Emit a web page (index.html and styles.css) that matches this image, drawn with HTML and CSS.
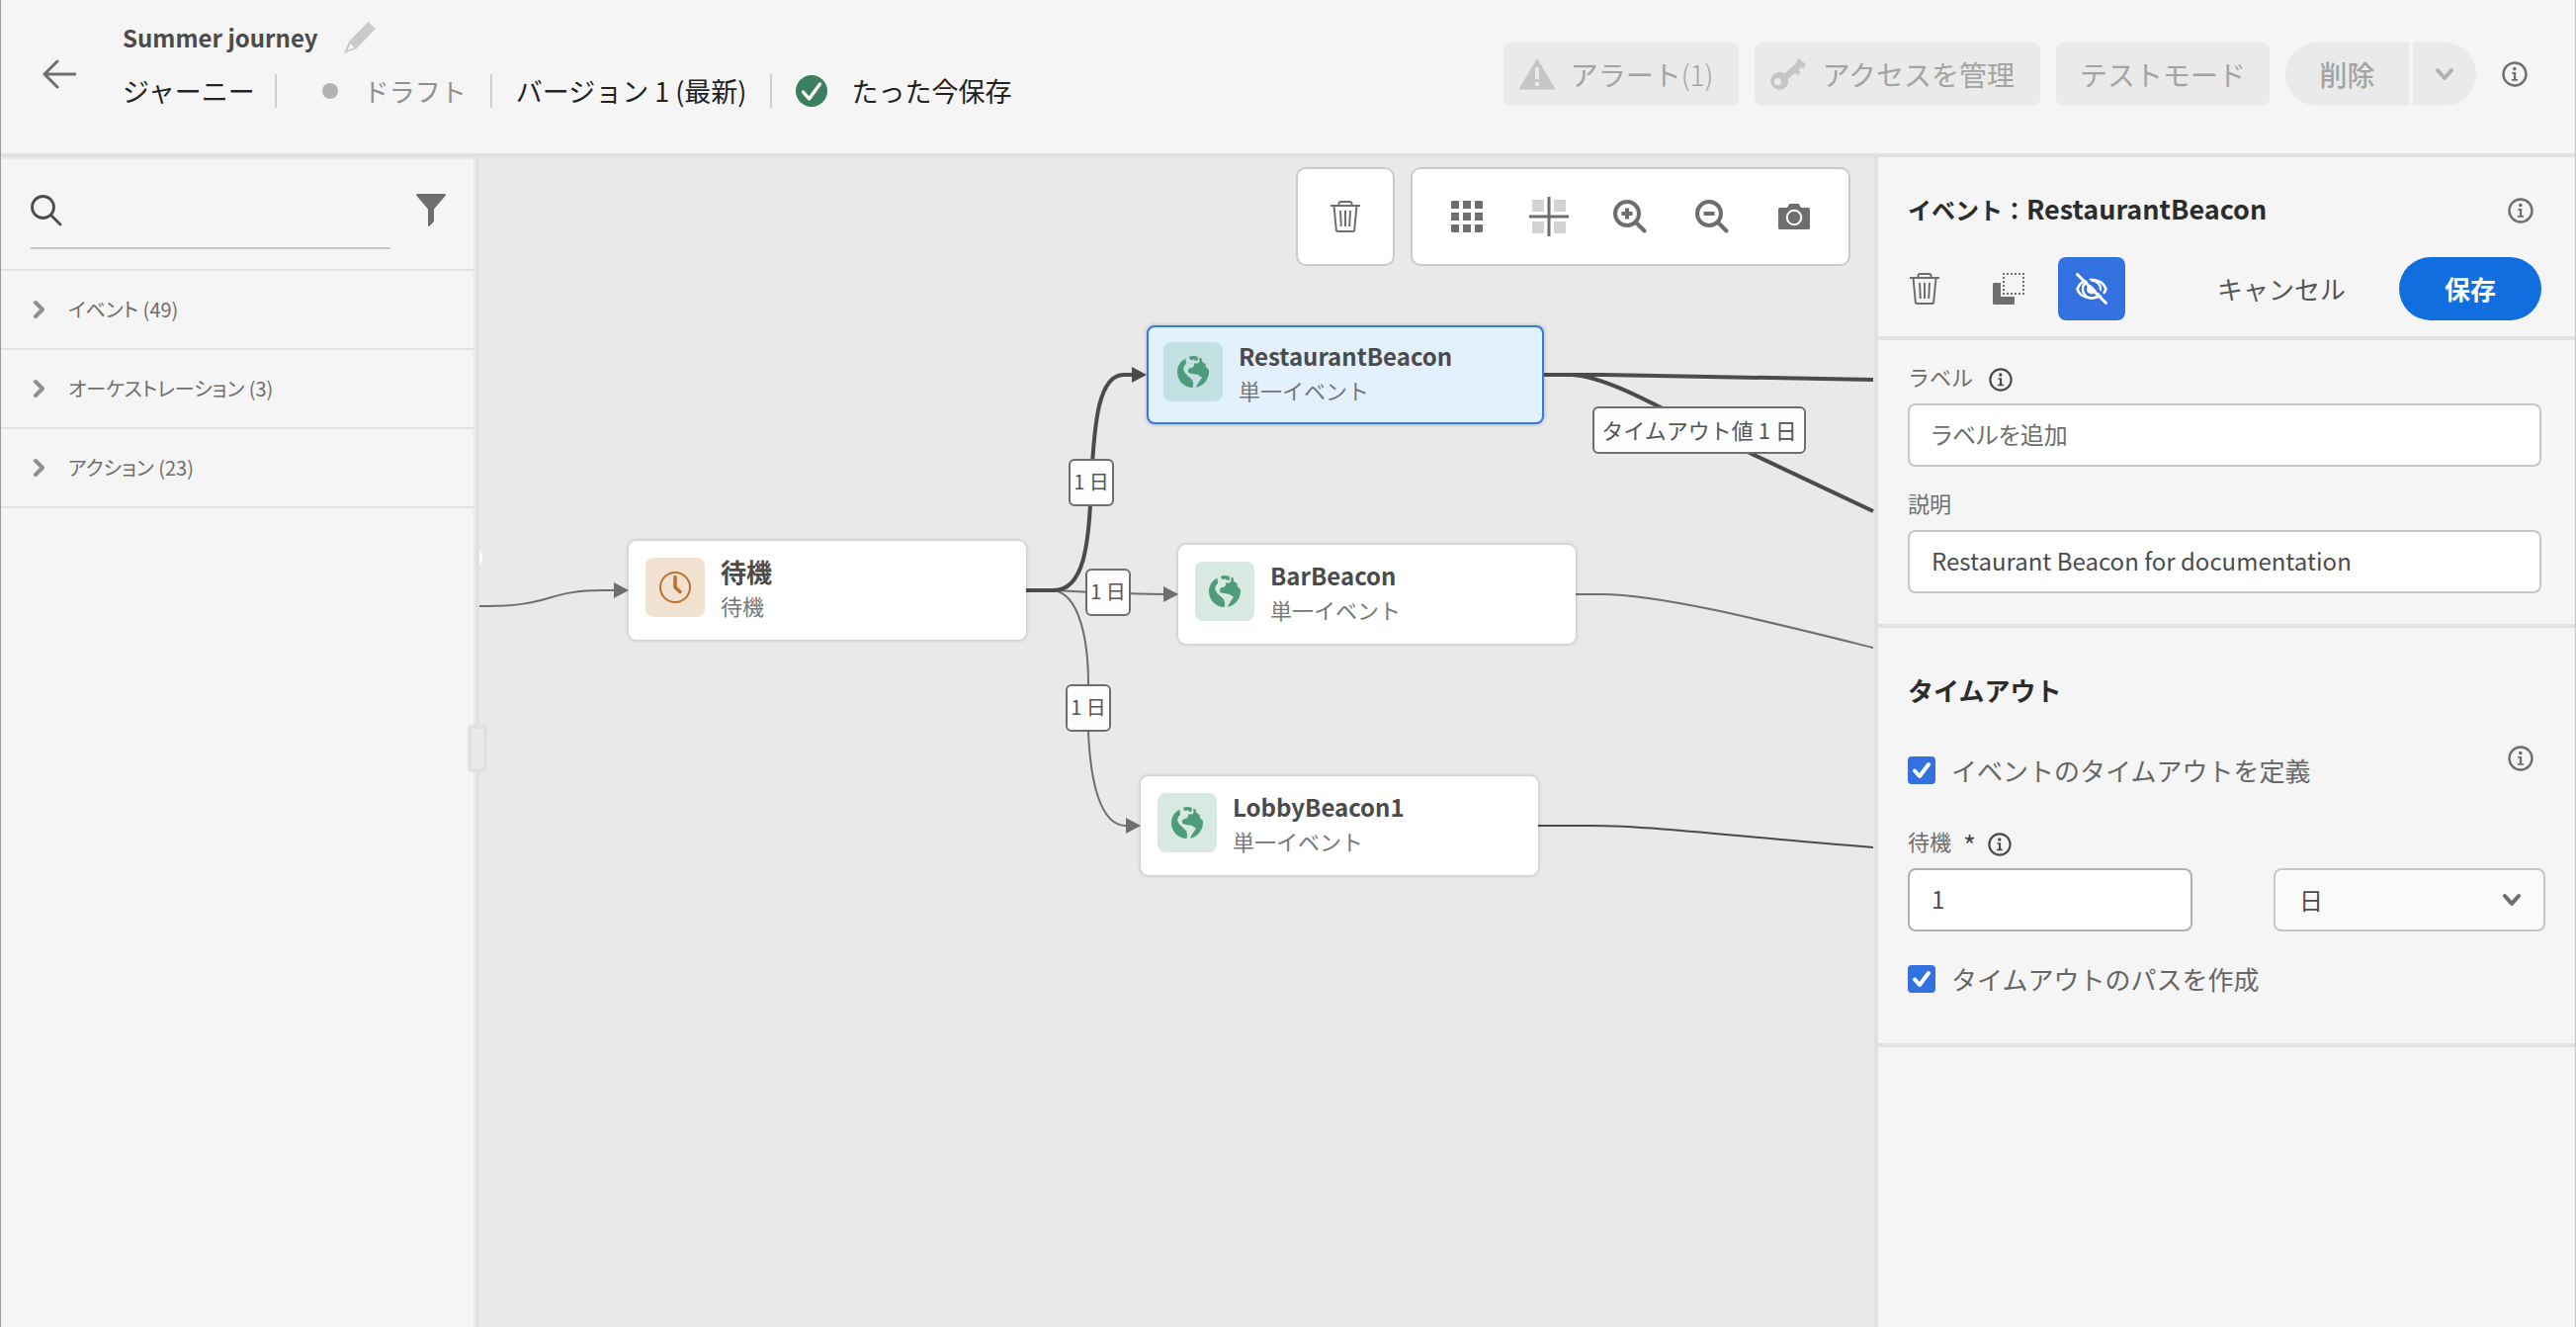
FILE: index.html
```html
<!DOCTYPE html>
<html lang="ja">
<head>
<meta charset="utf-8">
<meta name="viewport" content="width=device-width, initial-scale=1">
<title>Summer journey</title>
<link rel="stylesheet" href="styles.css">
</head>
<body>
<svg class="defs" aria-hidden="true">
  <symbol id="info" viewBox="0 0 26 26">
    <circle cx="13" cy="13" r="11.5" fill="none" stroke="currentColor" stroke-width="2.4"/>
    <circle cx="12.8" cy="7.6" r="1.8" fill="currentColor"/>
    <path d="M10.2 11h4v7h1.8v1.8h-6V18h1.9v-5.2h-1.7z" fill="currentColor"/>
  </symbol>
  <symbol id="trash" viewBox="0 0 30 32">
    <g fill="none" stroke="currentColor" stroke-width="2">
      <path d="M0 5h30M8.500 5V3Q8.500 1 10.500 1h9Q21.500 1 21.500 3v2M3.500 5l2.300 24.500q.2 1.500 1.500 1.500h15.400q1.300 0 1.500-1.500L26.500 5"/>
      <path d="M10 10l.8 16M15 10v16M20 10l-.8 16"/>
    </g>
  </symbol>
  <symbol id="globe" viewBox="0 0 32 32">
    <path fill="currentColor" d="M8.500 2.600C3 5.500 0 10.500 0 16.200 0 25 7 32 15.600 32L16.200 28.500 15.300 24.500 11.500 20.800 8 17.500 6.200 14 6.800 10.500 9.200 7.500 8.600 5z"/>
    <path fill="currentColor" d="M12 .8Q16-.6 20.300.6L21 3.200 20.200 5 17.800 4.600 16.800 3.300 14.600 4.200 12.400 3zM22.300 1.600 25.200 3 24.700 5 26 6.600 28.800 8.200 28.600 10.600 30.200 12.200 32 14.200C32.600 23 26.800 30.300 18.800 31.800L21.400 27 25 21.800 20.400 18.800 16.500 18.200 11.500 17.300 10.800 14.200 12.300 12.200 15.400 11.800 17 9.600 17.400 7.200 20.600 7.400 22.400 6z"/>
  </symbol>
  <symbol id="chevron" viewBox="0 0 20 14">
    <path d="M3 3l7 8 7-8" fill="none" stroke="currentColor" stroke-width="4" stroke-linecap="round" stroke-linejoin="round"/>
  </symbol>
  <symbol id="chevron-right" viewBox="0 0 14 20">
    <path d="M3 3l7 7-7 7" fill="none" stroke="currentColor" stroke-width="4" stroke-linecap="round" stroke-linejoin="round"/>
  </symbol>
</svg>

<header class="topbar">
  <button class="icon-btn back" aria-label="戻る"><svg width="34" height="30" viewBox="0 0 34 30"><path d="M15 2 2 15l13 13M2 15h31" fill="none" stroke="#6e6e6e" stroke-width="3" stroke-linecap="round" stroke-linejoin="round"/></svg></button>
  <div class="journey">
    <div class="journey-name">
      <h1>Summer journey</h1>
      <button class="icon-btn" aria-label="名前を編集"><svg width="32" height="32" viewBox="0 0 32 32"><path d="M24.500 0 32 7 12 27.500 0 32 5 20zM6.800 22 3.500 29l6.800-2.800z" fill="#cacaca" fill-rule="evenodd"/></svg></button>
    </div>
    <div class="journey-meta">
      <span class="meta">ジャーニー</span>
      <span class="meta status"><i class="dot"></i>ドラフト</span>
      <span class="meta">バージョン 1 (最新)</span>
      <span class="meta saved"><svg width="32" height="32" viewBox="0 0 32 32"><circle cx="16" cy="16" r="16" fill="#3a7f5f"/><path d="M7.500 17l6 7L24.500 9" fill="none" stroke="#fff" stroke-width="3.400" stroke-linecap="round" stroke-linejoin="round"/></svg>たった今保存</span>
    </div>
  </div>
  <div class="actions">
    <button class="action" disabled><svg width="36" height="32" viewBox="0 0 36 32"><path d="M18 0 36 30.500q0 1-1 1H1q-1 0-1-1z" fill="#c6c6c6"/><path d="M16 9h4v12h-4zM16 24h4v4h-4z" fill="#eaeaea"/></svg><span>アラート<span class="light">(1)</span></span></button>
    <button class="action" disabled><svg width="36" height="32" viewBox="0 0 36 32"><path d="M28.500 0 36 6l-2.500 4.500-2-1.500-3 3 2 2-2.500 3-3.500-2-7 6q1.500 4-1 7.500-4 4-9.500 3Q0 29 .2 22.500 1 16 7 14.200q4-1 7.500 1L25 6z" fill="#c6c6c6"/><circle cx="7.500" cy="23.500" r="3.500" fill="#eaeaea"/></svg>アクセスを管理</button>
    <button class="action wide" disabled>テストモード</button>
    <div class="split">
      <button class="split-main" disabled>削除</button>
      <button class="split-more" disabled aria-label="その他"><svg width="20" height="14"><use href="#chevron"/></svg></button>
    </div>
    <button class="icon-btn" aria-label="情報"><svg width="26" height="26"><use href="#info"/></svg></button>
  </div>
</header>

<main class="workspace">
  <aside class="palette">
    <div class="search-row">
      <label class="search">
        <svg width="32" height="32" viewBox="0 0 32 32"><g fill="none" stroke="#4b4b4b" stroke-width="2.800" stroke-linecap="round"><circle cx="12.500" cy="12.500" r="11"/><path d="M20.500 20.500 30 30"/></g></svg>
        <input type="search" aria-label="検索">
      </label>
      <button class="icon-btn" aria-label="フィルター"><svg width="30" height="33" viewBox="0 0 30 33"><path d="M1 0h28q1.500.5.5 2L18 15.500V28l-5 5q-1 .3-1-1V15.500L.5 2Q-.3.500 1 0z" fill="#6e6e6e"/></svg></button>
    </div>
    <button class="category"><svg width="14" height="20"><use href="#chevron-right"/></svg>イベント (49)</button>
    <button class="category"><svg width="14" height="20"><use href="#chevron-right"/></svg>オーケストレーション (3)</button>
    <button class="category"><svg width="14" height="20"><use href="#chevron-right"/></svg>アクション (23)</button>
    <span class="handle"></span>
  </aside>

  <section class="canvas">
    <svg class="edges" aria-hidden="true">
      <rect x="-20" y="394" width="23" height="22" rx="10" fill="#fff"/>
      <g fill="none" stroke="#6e6e6e" stroke-width="2">
        <path d="M0 454h10C70 454 70 438 124 438h14"/>
        <path d="M581 438c20 1 60 3 112 4"/>
        <path d="M581 438c26 4 35 50 35 95v48c2 50 12 95 38 95h4"/>
        <path d="M1109 442h26c60 0 170 28 275 54"/>
      </g>
      <g fill="none" stroke="#4b4b4b">
        <path stroke-width="2" d="M1071 676h54c60 0 160 12 285 22"/>
        <path stroke-width="4" d="M553 438h28c30 0 36-44 38-109C622 265 627 220 652 220h14"/>
        <path stroke-width="4" d="M1077 220h60L1410 225"/>
        <path stroke-width="4" d="M1105 220c40 2 100 40 180 79L1410 358"/>
      </g>
      <path fill="#4b4b4b" d="M660 212l15 8-15 8z"/>
      <path fill="#6e6e6e" d="M136 430l15 8-15 8zM692 434l15 8-15 8zM654 668l15 8-15 8z"/>
    </svg>

    <div class="toolbar">
      <div class="toolgroup single">
        <button class="icon-btn" aria-label="削除"><svg width="30" height="32"><use href="#trash"/></svg></button>
      </div>
      <div class="toolgroup">
        <button class="icon-btn" aria-label="グリッド"><svg width="32" height="32" viewBox="0 0 32 32"><path fill="#6e6e6e" d="M1 0h7v8H0V1zM12 0h8v8h-8zM24 0h7l1 1v7h-8zM0 12h8v8H0zM12 12h8v8h-8zM24 12h8v8h-8zM0 24h8v8H1l-1-1zM12 24h8v8h-8zM24 24h8v7l-1 1h-7z"/></svg></button>
        <button class="icon-btn" aria-label="中央揃え"><svg width="40" height="40" viewBox="0 0 40 40"><path fill="#d3d3d3" d="M3 3h12v12H3zM25 3h12v12H25zM3 25h12v12H3zM25 25h12v12H25z"/><path stroke="#6e6e6e" stroke-width="3" d="M20 0v40M0 20h40"/></svg></button>
        <button class="icon-btn" aria-label="拡大"><svg width="34" height="34" viewBox="0 0 34 34"><g fill="none" stroke="#6e6e6e" stroke-width="4"><circle cx="14" cy="14" r="12"/><path d="M14 8.500v11M8.500 14h11"/><path d="M23.500 23.500 31.500 31.500" stroke-linecap="round"/></g></svg></button>
        <button class="icon-btn" aria-label="縮小"><svg width="34" height="34" viewBox="0 0 34 34"><g fill="none" stroke="#6e6e6e" stroke-width="4"><circle cx="14" cy="14" r="12"/><path d="M8.500 14h11"/><path d="M23.500 23.500 31.500 31.500" stroke-linecap="round"/></g></svg></button>
        <button class="icon-btn" aria-label="スクリーンショット"><svg width="32" height="26" viewBox="0 0 32 26"><path fill="#6e6e6e" d="M1.500 4H9l2-3.500q.3-.5 1-.5h8q.7 0 1 .5L23 4h7.500Q32 4 32 5.500v19q0 1.500-1.500 1.500h-29Q0 26 0 24.500v-19Q0 4 1.500 4z"/><circle cx="16" cy="14" r="7.200" fill="#6e6e6e" stroke="#fff" stroke-width="2"/></svg></button>
      </div>
    </div>

    <article class="node node-wait">
      <span class="tile orange"><svg width="32" height="32" viewBox="0 0 32 32"><g fill="none" stroke="#c0702a"><circle cx="16" cy="16" r="15" stroke-width="2"/><path d="M16 5.500V16l5 4.500" stroke-width="3.600" stroke-linecap="round" stroke-linejoin="round"/></g></svg></span>
      <div><h3>待機</h3><p>待機</p></div>
    </article>
    <article class="node node-restaurant selected">
      <span class="tile green"><svg width="32" height="32"><use href="#globe"/></svg></span>
      <div><h3>RestaurantBeacon</h3><p>単一イベント</p></div>
    </article>
    <article class="node node-bar">
      <span class="tile green"><svg width="32" height="32"><use href="#globe"/></svg></span>
      <div><h3>BarBeacon</h3><p>単一イベント</p></div>
    </article>
    <article class="node node-lobby">
      <span class="tile green"><svg width="32" height="32"><use href="#globe"/></svg></span>
      <div><h3>LobbyBeacon1</h3><p>単一イベント</p></div>
    </article>

    <span class="delay delay-restaurant">1 日</span>
    <span class="delay delay-bar">1 日</span>
    <span class="delay delay-lobby">1 日</span>
    <span class="delay delay-timeout">タイムアウト値 1 日</span>
  </section>

  <aside class="panel">
    <div class="panel-head">
      <div class="panel-title">
        <h2><span class="kind">イベント：</span>RestaurantBeacon</h2>
        <button class="icon-btn" aria-label="情報"><svg width="26" height="26"><use href="#info"/></svg></button>
      </div>
      <div class="panel-actions">
        <button class="icon-btn" aria-label="削除"><svg width="30" height="32"><use href="#trash"/></svg></button>
        <button class="icon-btn copy" aria-label="コピー"><svg width="32" height="32" viewBox="0 0 32 32"><path fill="#6e6e6e" d="M1.500 10H8v14h14v6.500q0 1.500-1.500 1.500h-19Q0 32 0 30.500v-19Q0 10 1.500 10z"/><path d="M10 1h22M10 21h22M11 0v22M31 0v22" fill="none" stroke="#6e6e6e" stroke-width="2" stroke-dasharray="2 2"/></svg></button>
        <button class="toggle" aria-label="非表示" aria-pressed="true"><svg width="32" height="32" viewBox="0 0 32 32"><path d="M1.500 16.500C6 3.500 26 3.500 30.500 16.500 26 28.500 6 28.500 1.500 16.500z" fill="none" stroke="#fff" stroke-width="2.600"/><circle cx="16" cy="16.500" r="9" fill="none" stroke="#fff" stroke-width="2.400"/><circle cx="16" cy="16.500" r="5" fill="#fff"/><path d="M3.500 -1.500 33 28" stroke="#3471e0" stroke-width="3"/><path d="M1.500 1.500 30.500 30.500" stroke="#fff" stroke-width="3" stroke-linecap="round"/></svg></button>
        <button class="cancel">キャンセル</button>
        <button class="save">保存</button>
      </div>
    </div>

    <div class="panel-section details">
      <div class="field">
        <label for="f-label">ラベル <svg class="hint" width="24" height="24"><use href="#info"/></svg></label>
        <input id="f-label" type="text" placeholder="ラベルを追加">
      </div>
      <div class="field">
        <label for="f-desc">説明</label>
        <input id="f-desc" type="text" value="Restaurant Beacon for documentation">
      </div>
    </div>

    <div class="panel-section timeout">
      <h3>タイムアウト</h3>
      <div class="define">
        <label class="check"><input type="checkbox" checked>イベントのタイムアウトを定義</label>
        <button class="icon-btn" aria-label="情報"><svg width="26" height="26"><use href="#info"/></svg></button>
      </div>
      <div class="field">
        <label for="f-wait">待機 <span class="required">*</span> <svg class="hint" width="24" height="24"><use href="#info"/></svg></label>
        <div class="duration">
          <input id="f-wait" type="text" value="1">
          <span class="select"><select aria-label="単位"><option>日</option></select><svg width="20" height="14"><use href="#chevron"/></svg></span>
        </div>
      </div>
      <label class="check"><input type="checkbox" checked>タイムアウトのパスを作成</label>
    </div>
  </aside>
</main>
</body>
</html>
```
FILE: styles.css
```css
* { box-sizing: border-box; }

body {
  margin: 0;
  min-height: 100vh;
  display: flex;
  flex-direction: column;
  border-left: 1px solid #9a9a9a;
  border-right: 1px solid #c0c0c0;
  background: #f5f5f5;
  color: #4b4b4b;
  font-family: "Noto Sans CJK JP", "Noto Sans", sans-serif;
  font-size: 26px;
  line-height: 32px;
}

h1, h2, h3, p { margin: 0; }

button, input, select {
  font: inherit;
  color: inherit;
  border: 0;
  background: none;
  padding: 0;
  margin: 0;
}

svg { display: block; flex: none; }
.defs { position: absolute; width: 0; height: 0; }
.icon-btn { display: flex; color: #6e6e6e; flex: none; }

/* Top bar */
.topbar {
  display: flex;
  align-items: flex-start;
  padding: 19px 48px 0 42px;
  height: 159px;
  border-bottom: 4px solid #e1e1e1;
  white-space: nowrap;
}
.back { margin-top: 41px; margin-right: 47px; }
.journey-name { display: flex; align-items: center; gap: 26px; height: 38px; }
h1 { font-size: 24px; line-height: 38px; font-weight: 700; }
.journey-meta {
  display: flex;
  align-items: center;
  margin-top: 18px;
  height: 34px;
  color: #222;
  font-size: 27px;
}
.meta { display: flex; align-items: center; height: 34px; line-height: 34px; }
.meta + .meta { border-left: 2px solid #cfcfcf; margin-left: 24px; padding-left: 24px; }
.journey-meta .status { margin-left: 20px; padding-left: 46px; gap: 26px; color: #909090; font-size: 26px; }
.meta.saved { gap: 24px; }
.dot { width: 16px; height: 16px; border-radius: 50%; background: #b3b3b3; }

.actions { display: flex; align-items: center; gap: 16px; margin-left: auto; margin-top: 24px; }
.action {
  display: flex;
  align-items: center;
  gap: 16px;
  height: 64px;
  padding: 0 26px 0 16px;
  border-radius: 8px;
  background: #eaeaea;
  color: #a3a3a3;
  font-size: 28px;
}
.action.wide { padding: 0 24px; }
.light { font-weight: 300; }
.split { display: flex; gap: 4px; margin-right: 10px; }
.split button { height: 64px; background: #eaeaea; color: #a3a3a3; font-size: 28px; font-weight: 500; }
.split-main { width: 125px; border-radius: 32px 0 0 32px; }
.split .split-more { display: flex; align-items: center; justify-content: center; width: 64px; border-radius: 0 32px 32px 0; color: #b0b0b0; }

/* Workspace */
.workspace { flex: 1; display: grid; grid-template-columns: 484px minmax(0, 1fr) 709px; }

.palette {
  position: relative;
  z-index: 1;
  padding-right: 2px;
  border-right: 4px solid #e1e1e1;
  border-top: 2px solid #eaeaea;
  box-shadow: inset -2px 0 #eaeaea;
}
.search-row { display: flex; justify-content: space-between; padding: 24px 28px 20px 30px; border-bottom: 2px solid #e1e1e1; }
.search { display: flex; align-items: flex-start; gap: 12px; padding-top: 12px; width: 364px; height: 67px; border-bottom: 2px solid #c6c6c6; }
.search input { flex: 1; min-width: 0; height: 32px; outline: 0; }
.search-row .icon-btn { align-items: flex-start; padding-top: 11px; }
.category {
  display: flex;
  align-items: center;
  gap: 22px;
  width: 100%;
  height: 80px;
  padding-left: 32px;
  border-bottom: 2px solid #e1e1e1;
  color: #6e6e6e;
  font-size: 20px;
  font-feature-settings: "palt";
}
.category svg { color: #8e8e8e; }
.handle {
  position: absolute;
  top: 572px;
  right: -12px;
  width: 20px;
  height: 48px;
  border: 4px solid #e1e1e1;
  border-radius: 4px;
  background: #eaeaea;
}

/* Canvas */
.canvas { position: relative; overflow: hidden; background: #e9e9e9; }
.edges { position: absolute; inset: 0; width: 100%; height: 100%; }
.toolbar { position: relative; display: flex; justify-content: flex-end; gap: 16px; padding: 10px 24px; }
.toolgroup {
  display: flex;
  align-items: center;
  width: 445px;
  height: 100px;
  padding: 0 14px;
  border: 2px solid #cacaca;
  border-radius: 10px;
  background: #fff;
}
.toolgroup.single { width: 100px; }
.toolgroup .icon-btn { flex: 1; justify-content: center; }

.node {
  position: absolute;
  display: flex;
  gap: 16px;
  width: 402px;
  height: 100px;
  padding: 17px;
  border-radius: 8px;
  background: #fff;
  box-shadow: 0 0 4px rgba(0, 0, 0, .25);
}
.node h3 { font-size: 24px; line-height: 28px; }
.node p { font-size: 22px; line-height: 32px; padding-top: 4px; color: #777; }
.node.selected { padding: 15px; border: 2px solid #3478ee; background: #e3f1ff; }
.tile { display: flex; align-items: center; justify-content: center; width: 60px; height: 60px; border-radius: 8px; flex: none; }
.tile.orange { background: #f2e2d1; }
.tile.green { background: #d8e9e2; color: #4f9c7c; }
.selected .tile.green { background: #c3e0e2; }
.node-wait { left: 151px; top: 388px; }
.node-wait h3 { font-size: 26px; }
.node-restaurant { left: 675px; top: 170px; }
.node-bar { left: 707px; top: 392px; }
.node-lobby { left: 669px; top: 626px; }

.delay {
  position: absolute;
  display: flex;
  align-items: center;
  justify-content: center;
  width: 46px;
  height: 48px;
  padding-bottom: 2px;
  border: 2px solid #6e6e6e;
  border-radius: 6px;
  background: #fdfdfd;
  color: #555;
  font-size: 20px;
  white-space: nowrap;
}
.delay-restaurant { left: 596px; top: 305px; }
.delay-bar { left: 613px; top: 416px; }
.delay-lobby { left: 593px; top: 533px; }
.delay-timeout { left: 1126px; top: 252px; width: 216px; font-size: 22px; }

/* Properties panel */
.panel { border-left: 4px solid #e1e1e1; }
.panel-head { padding: 34px 34px 16px 30px; border-bottom: 4px solid #e1e1e1; }
.panel-title { display: flex; justify-content: space-between; align-items: center; padding-right: 8px; height: 40px; }
h2 { font-size: 27px; line-height: 36px; padding-bottom: 4px; color: #2c2c2c; }
.kind { font-size: 24px; }
.panel-actions { display: flex; align-items: center; margin-top: 27px; color: #555; }
.panel-actions .icon-btn { margin-left: 2px; }
.panel-actions .copy { margin-left: 54px; }
.toggle { display: flex; align-items: center; justify-content: center; width: 68px; height: 64px; margin-left: 34px; border-radius: 8px; background: #3471e0; }
.cancel { margin-left: auto; margin-right: 54px; }
.save { width: 144px; height: 64px; border-radius: 32px; background: #116ede; color: #fff; font-weight: 700; }

.panel-section { padding: 0 34px 0 30px; border-bottom: 4px solid #e1e1e1; }
.details { padding-top: 20px; padding-bottom: 31px; display: grid; gap: 20px; }
.field label { display: flex; align-items: flex-start; gap: 16px; height: 44px; font-size: 22px; color: #6e6e6e; }
.hint { margin-top: 8px; color: #4b4b4b; }
.field input, .select select {
  display: block;
  width: 100%;
  height: 64px;
  padding: 0 22px 4px;
  border: 2px solid #c6c6c6;
  border-radius: 8px;
  background: #fff;
  font-size: 24px;
}
.field input::placeholder { color: #6e6e6e; opacity: 1; font-feature-settings: "palt"; }

.timeout { padding-top: 43px; padding-bottom: 45px; }
.timeout h3 { font-size: 26px; line-height: 40px; color: #2c2c2c; }
.define { display: flex; align-items: flex-start; justify-content: space-between; margin-top: 36px; padding-right: 8px; }
.define .check { margin-top: 5px; }
.check { display: flex; align-items: center; gap: 16px; height: 40px; color: #666; }
.check input {
  appearance: none;
  width: 28px;
  height: 28px;
  border-radius: 4px;
  background: #3471e0 url("data:image/svg+xml,%3Csvg xmlns='http://www.w3.org/2000/svg' viewBox='0 0 28 28'%3E%3Cpath d='M7 14.500l5 5.500 9-12' fill='none' stroke='%23fff' stroke-width='4' stroke-linecap='round' stroke-linejoin='round'/%3E%3C/svg%3E");
}
.timeout .field { margin-top: 35px; margin-bottom: 28px; }
.timeout .field label { gap: 12px; }
.required { color: #4b4b4b; font-size: 28px; line-height: 40px; }
.duration { display: flex; justify-content: space-between; margin-right: -4px; }
.duration input { width: 288px; border-color: #b0b0b0; }
.select { position: relative; width: 275px; }
.select select { appearance: none; background: #fafafa; padding: 0 24px; }
.select svg { position: absolute; right: 24px; top: 25px; color: #6e6e6e; pointer-events: none; }
```
